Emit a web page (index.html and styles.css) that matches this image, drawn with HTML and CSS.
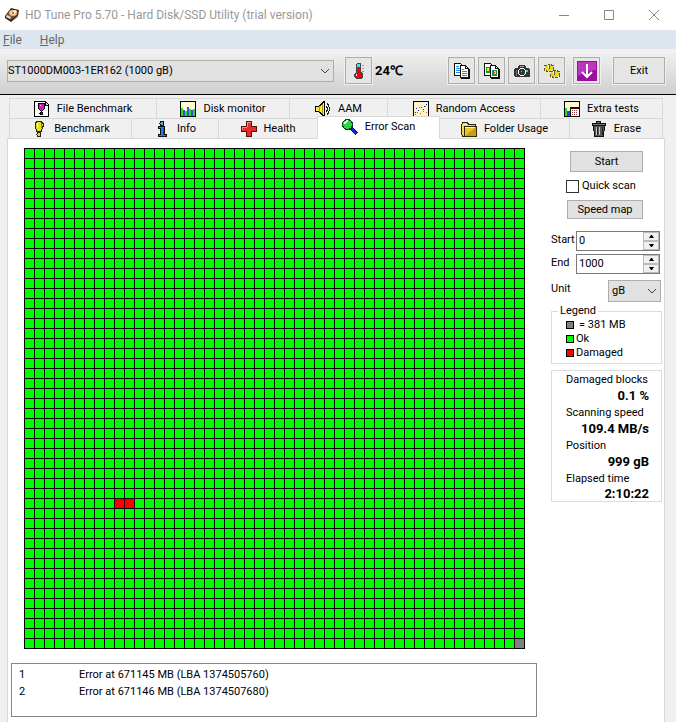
FILE: index.html
```html
<!DOCTYPE html>
<html lang="en">
<head>
<meta charset="utf-8">
<meta name="viewport" content="width=device-width, initial-scale=1">
<title>HD Tune Pro 5.70 - Hard Disk/SSD Utility (trial version)</title>
<link rel="stylesheet" href="styles.css">
</head>
<body>
<header class="titlebar">
  <svg class="app-icon" viewBox="0 0 16 16" aria-hidden="true"><path d="M1 9 7 1l8 2-1 6-7 6-6-4z" fill="#252020"/><path d="m2 8 5-6 7 2-1 4-6 5-5-3z" fill="#765037"/><ellipse cx="9" cy="6" rx="4" ry="3" fill="#f2b878"/><path d="m6 6 5-3 2 1-3 4z" fill="#fff0ce"/><circle cx="9" cy="6" r="1" fill="#765037"/><path d="m3 8 4 2-1 2-4-2z" fill="#ddd"/><path d="m12 10 2-2v2l-6 4z" fill="#c17438"/></svg>
  <h1 class="title">HD Tune Pro 5.70 - Hard Disk/SSD Utility (trial version)</h1>
  <div class="window-controls">
    <button class="window-button" aria-label="Minimize"><svg viewBox="0 0 12 12"><path d="M1 6.500h10"/></svg></button>
    <button class="window-button" aria-label="Maximize"><svg viewBox="0 0 12 12"><path d="M1.500 1.500h9v9h-9z"/></svg></button>
    <button class="window-button" aria-label="Close"><svg viewBox="0 0 12 12"><path d="m1 1 10 10M11 1 1 11"/></svg></button>
  </div>
</header>
<nav class="menu"><a href="#file"><u>F</u>ile</a><a href="#help"><u>H</u>elp</a></nav>
<div class="toolbar">
  <div class="select-box drive">
    <select aria-label="Drive"><option>ST1000DM003-1ER162 (1000 gB)</option></select>
    <svg class="chevron" viewBox="0 0 10 6"><path d="m1 1 4 4 4-4"/></svg>
  </div>
  <button class="tool" aria-label="Temperature"><svg class="icon" viewBox="0 0 16 16"><path d="M6 0h4v9l2 2v3l-2 2H5l-2-2v-3l2-2V1h1z" fill="#444"/><path d="M6 1h3v4H6z" fill="#4de0e8"/><path d="M6 4h3v6l2 2v2l-2 1H6l-2-1v-2l2-2z" fill="#f00"/><path d="M5.500 11v2" stroke="#fff"/><path d="M11 2.500h2M11 5.500h2M11 8.500h2" stroke="#999"/></svg></button>
  <span class="temperature">24℃</span>
  <div class="tool-group">
    <button class="tool" aria-label="Copy text"><svg class="icon" viewBox="0 0 16 16"><path d="M.5.500h6l3 3v9h-9z" fill="#fff" stroke="#111"/><path d="M2 3.500h3M2 5.500h4M2 7.500h4M2 9.500h4" stroke="#258be8"/><path d="M6.500 2.500h5l3 3v9h-8z" fill="#fff" stroke="#111"/><path d="M11.500 2.500v3h3M7 15.500h8.500V6" fill="none" stroke="#111"/><path d="M8 6.500h2M8 8.500h5M8 10.500h5M8 12.500h5" stroke="#258be8"/></svg></button>
    <button class="tool" aria-label="Copy image"><svg class="icon" viewBox="0 0 16 16"><path d="M.5.500h6l3 3v9h-9z" fill="#fff" stroke="#111"/><path d="M2 4h4v6H2z" fill="#149832"/><path d="M3 5h2v3H3z" fill="#ffe03b"/><path d="M6.500 2.500h5l3 3v9h-8z" fill="#fff" stroke="#111"/><path d="M11.500 2.500v3h3M7 15.500h8.500V6" fill="none" stroke="#111"/><path d="M8 7h5v6H8z" fill="#149832"/><path d="M8 7h2v2H8z" fill="#2766dc"/><path d="M10 8h2v3h-2z" fill="#ffe03b"/><path d="M10 9h1v1h-1z" fill="#f33"/></svg></button>
    <button class="tool" aria-label="Save screenshot"><svg class="icon" viewBox="0 0 16 16"><path d="M1 5h3V3h1V2h6v1h1v2h3v1h1v7l-1 1H1l-1-1V6h1z" fill="#303535"/><path d="M6 3h4v1H6z" fill="#aaa"/><path d="M6 5h4v1h1v1h1v4h-1v1h-1v1H6v-1H5v-1H4V7h1V6h1z" fill="#fff"/><path d="M6 6h4v1h1v4h-1v1H6v-1H5V7h1z" fill="#303535"/><path d="M7 8h1v1H7z" fill="#bbb"/><path d="M12 7h2v2h-2z" fill="#38e658"/><path d="M2 7h1v6H2z" fill="#777"/></svg></button>
    <button class="tool" aria-label="Options"><svg class="icon gears" viewBox="0 0 16 16"><ellipse cx="5" cy="5" rx="4" ry="3" fill="#d8cc17" stroke="#625c12" stroke-width="3" stroke-dasharray="2 1"/><ellipse cx="5" cy="5" rx="4" ry="3" fill="#e5d91d"/><ellipse cx="11" cy="11" rx="4" ry="3" fill="#d8cc17" stroke="#625c12" stroke-width="3" stroke-dasharray="2 1"/><ellipse cx="11" cy="11" rx="4" ry="3" fill="#e5d91d"/><path d="M5.500 1v5M10.500 7v5" stroke="#555"/><path d="M4.500 2v3M9.500 8v3" stroke="#fff"/></svg></button>
    <button class="tool update" aria-label="Update"><svg viewBox="0 0 20 20"><path d="M0 0h20v20H0z" fill="#9b0c9f"/><path d="M1 1h18v8Q9 10 1 15z" fill="#b936bd"/><path d="M10 3v13M5 11l5 5 5-5" fill="none" stroke="#fff" stroke-width="2"/></svg></button>
    <button class="tool exit">Exit</button>
  </div>
</div>
<main class="workspace">
  <nav class="tabs tabs-back">
    <button class="tab"><svg class="icon" viewBox="0 0 16 16"><path d="M.5.500h11l3 3v12H.5z" fill="#fff" stroke="#000"/><path d="M11.500 1v3h3" fill="#ddd" stroke="#000"/><path d="M5 2h5l1 2-1 4-2 2H7L5 8 4 4z" fill="#d018cc" stroke="#000"/><path d="M6 4.500h1" stroke="#fff"/><circle cx="7.500" cy="12.500" r="1.500" fill="#d018cc" stroke="#000"/></svg>File Benchmark</button>
    <button class="tab"><svg class="icon" viewBox="0 0 16 16"><path d="M0 0h16v16H0z" fill="#000"/><path d="M1 1h14v14H1z" fill="#fffbd1"/><path d="M1 7h2v8H1zm4 3h2v5H5zm4-2h2v7H9zm4 0h2v7h-2z" fill="#18e51e"/><path d="M3 9h2v6H3zm4-3h2v9H7zm4 3h2v6h-2z" fill="#4349e7"/></svg>Disk monitor</button>
    <button class="tab"><svg class="icon" viewBox="0 0 16 16"><path d="M.5 5.500H4l5-5v15l-5-5H.5z" fill="#ffe93b" stroke="#000"/><path d="M4.500 5v6M7.500 3v10" stroke="#a89500"/><path d="M11 5q3 3 0 6M12 2q5 6 0 12" fill="none" stroke="#222"/></svg>AAM</button>
    <button class="tab"><svg class="icon" viewBox="0 0 16 16"><path d="M0 0h16v16H0z" fill="#000"/><path d="M1 1h14v14H1z" fill="#fff5c4"/><path d="M2 11h1v1H2zm3-2h1v1H5zm3-3h1v1H8zm3-1h1v1h-1zm2-2h1v1h-1zM3 7h1v1H3zm7 1h1v1h-1z" fill="#2229b2"/><path d="M2 13h1v1H2zm2-2h1v1H4zm3 1h1v1H7zm3-2h1v1h-1zm3 1h1v1h-1zM6 6h1v1H6zm6-1h1v1h-1z" fill="#e44"/></svg>Random Access</button>
    <button class="tab"><svg class="icon" viewBox="0 0 16 16"><path d="M0 0h16v16H0z" fill="#000"/><path d="M1 1h14v14H1z" fill="#fff9cf"/><path d="M1 7h2v8H1z" fill="#22df33"/><path d="M3 10h3v5H3z" fill="#343ee0"/><path d="M6 6h10v10H6z" fill="#111"/><path d="M7 8h8v7H7z" fill="#fff"/><path d="M8 9h1v1H8zm2 0h1v1h-1zm2 0h1v1h-1zm-4 2h1v1H8zm2 0h1v1h-1zm2 0h1v1h-1zm-4 2h1v1H8zm2 0h1v1h-1zm2 0h1v1h-1z" fill="#933"/></svg>Extra tests</button>
  </nav>
  <nav class="tabs tabs-front">
    <button class="tab"><svg class="icon" viewBox="0 0 16 16"><path d="M6 .500h4l2 2v3l-2 5H6l-2-5v-3z" fill="#e4df16" stroke="#222"/><path d="M6.500 2v4" stroke="#fff"/><path d="M10.500 2v5" stroke="#8c8617"/><circle cx="8" cy="13.500" r="2" fill="#e4df16" stroke="#222"/></svg>Benchmark</button>
    <button class="tab"><svg class="icon" viewBox="0 0 16 16"><circle cx="8" cy="2.500" r="2" fill="#20bcec" stroke="#111"/><path d="M4.500 5.500h6v8h2v2h-8v-2h2v-6h-2z" fill="#1680ee" stroke="#111"/><path d="M9.500 7v7" stroke="#143cbc"/></svg>Info</button>
    <button class="tab"><svg class="icon" viewBox="0 0 16 16"><path d="M5.500.500h5v5h5v5h-5v5h-5v-5h-5v-5h5z" fill="#e42c2c" stroke="#5b1010"/><path d="M6.500 6V1.500h3M1.500 9V6.500h4" fill="none" stroke="#f88"/></svg>Health</button>
    <button class="tab active" aria-current="page"><svg class="icon" viewBox="0 0 16 16"><path d="m9 9 6 6" stroke="#111" stroke-width="4"/><path d="m10 10 5 5" stroke="#1b23e5" stroke-width="2"/><circle cx="5.500" cy="5.500" r="5" fill="#26d745" stroke="#173d1c"/><path d="M3 5q0-3 3-3" fill="none" stroke="#d4ffd8" stroke-width="2"/></svg>Error Scan</button>
    <button class="tab"><svg class="icon" viewBox="0 0 16 16"><path d="M.5 3.500 2 1.500h4l2 2h6v2h1v10H2l-1.500-2z" fill="#f0d850" stroke="#222"/><path d="M3.500 5.500h12v10h-12z" fill="#e9c52b" stroke="#332900"/><path d="M4 15 15 6v9z" fill="#c99d18"/><path d="M2 3.500h4M4 6.500h10" stroke="#fff4a3"/></svg>Folder Usage</button>
    <button class="tab"><svg class="icon" viewBox="0 0 16 16"><path d="M5.500 2V.500h4V2M1.500 2.500h13v2h-13z" fill="#777" stroke="#111"/><path d="M2.500 4.500h11l-1 11h-9z" fill="#555" stroke="#111"/><path d="M5.500 6v8M8.500 6v8" stroke="#c6c6c6"/><path d="M6.500 6v8M11.500 6v8" stroke="#222"/></svg>Erase</button>
  </nav>
  <section class="panel">
    <div class="scan">
      <svg class="map" viewBox="0 0 501 501" role="img" aria-label="Scanned blocks">
        <defs><pattern id="blocks" width="10" height="10" patternUnits="userSpaceOnUse"><rect width="10" height="10" fill="#000"/><rect x="1" y="1" width="9" height="9" fill="#0f0"/></pattern></defs>
        <rect width="501" height="501" fill="url(#blocks)"/>
        <path d="M91 351h9v9h-9zm10 0h9v9h-9z" fill="#f00"/>
        <path d="M491 491h9v9h-9z" fill="#808080"/>
      </svg>
      <aside class="side">
        <button class="action start">Start</button>
        <label class="check"><input type="checkbox">Quick scan</label>
        <button class="action speed">Speed map</button>
        <div class="field"><label for="start">Start</label><div class="number"><input id="start" type="text" value="0"><div class="spin"><button aria-label="Increase start"><svg viewBox="0 0 5 3"><path d="M0 3h5L3 0H2z"/></svg></button><button aria-label="Decrease start"><svg viewBox="0 0 5 3"><path d="M0 0h5L3 3H2z"/></svg></button></div></div></div>
        <div class="field"><label for="end">End</label><div class="number"><input id="end" type="text" value="1000"><div class="spin"><button aria-label="Increase end"><svg viewBox="0 0 5 3"><path d="M0 3h5L3 0H2z"/></svg></button><button aria-label="Decrease end"><svg viewBox="0 0 5 3"><path d="M0 0h5L3 3H2z"/></svg></button></div></div></div>
        <div class="field unit"><label for="unit">Unit</label><div class="select-box"><select id="unit"><option>gB</option></select><svg class="chevron" viewBox="0 0 10 6"><path d="m1 1 4 4 4-4"/></svg></div></div>
        <fieldset class="legend"><legend>Legend</legend>
          <ul><li class="size"><i></i>= 381 MB</li><li class="ok"><i></i>Ok</li><li class="damaged"><i></i>Damaged</li></ul>
        </fieldset>
        <dl class="stats">
          <dt>Damaged blocks</dt><dd>0.1 %</dd>
          <dt>Scanning speed</dt><dd>109.4 MB/s</dd>
          <dt>Position</dt><dd>999 gB</dd>
          <dt>Elapsed time</dt><dd>2:10:22</dd>
        </dl>
      </aside>
    </div>
    <div class="log">
      <table><tbody>
        <tr><td class="index">1</td><td>Error at 671145 MB (LBA 1374505760)</td></tr>
        <tr><td class="index">2</td><td>Error at 671146 MB (LBA 1374507680)</td></tr>
      </tbody></table>
    </div>
  </section>
</main>
</body>
</html>
```
FILE: styles.css
```css
* { box-sizing: border-box; }

body {
  margin: 0;
  min-height: 100vh;
  display: flex;
  flex-direction: column;
  background: #f0f0f0;
  color: #000;
  font: 11px/14px Roboto, "Liberation Sans", sans-serif;
}

button, input, select { font: inherit; color: inherit; border-radius: 0; }
button { padding: 0; }
svg { display: block; }
.icon { width: 16px; height: 16px; flex: none; shape-rendering: crispEdges; }

.titlebar {
  display: flex;
  align-items: center;
  height: 30px;
  padding-left: 4px;
  background: #fff;
}
.app-icon { width: 16px; height: 16px; }
.title {
  margin: 0 0 0 5px;
  color: #999;
  font: 12px/16px Roboto, sans-serif;
  white-space: nowrap;
}
.window-controls { display: flex; margin-left: auto; }
.window-button {
  display: grid;
  place-items: center;
  width: 45px;
  height: 30px;
  border: 0;
  background: none;
}
.window-button svg { width: 12px; height: 12px; fill: none; stroke: #888; }

.menu {
  display: flex;
  gap: 18px;
  height: 19px;
  padding-left: 3px;
  background: #dde5ee;
  font: 12px/20px Roboto, sans-serif;
}
.menu a { color: #666; text-decoration: none; }

.toolbar {
  display: flex;
  align-items: center;
  height: 46px;
  padding: 0 11px 2px 7px;
  border-bottom: 1px solid #000;
  background: linear-gradient(#f2f2f2, #cfcfcf);
}
.select-box { position: relative; height: 22px; }
.select-box select {
  appearance: none;
  width: 100%;
  height: 100%;
  padding: 0 20px 0 3px;
  border: 1px solid #adadad;
  background: #e1e1e1;
}
.select-box.drive select { padding-left: 0; }
.chevron {
  position: absolute;
  right: 4px;
  top: 8px;
  width: 10px;
  height: 6px;
  fill: none;
  stroke: #444;
  pointer-events: none;
}
.drive { flex: 1; max-width: 420px; }
.tool {
  display: grid;
  place-items: center;
  width: 27px;
  height: 27px;
  padding: 1px 0 0 1px;
  border: 1px solid #adadad;
  background: #e6e6e6;
  outline: 1px solid #efefef;
}
.drive + .tool { margin-left: 11px; }
.temperature { margin: 0 45px 0 3px; font-size: 13px; font-weight: bold; }
.tool-group { display: flex; gap: 3px; margin-left: auto; }
.update { margin-left: 5px; }
.update svg { width: 20px; height: 20px; }
.exit { width: 52px; margin-left: 10px; padding: 0; }

.workspace {
  flex: 1;
  display: flex;
  flex-direction: column;
  padding: 3px 11px 0 7px;
}
.tabs { display: grid; margin: 0 2px; height: 20px; border-left: 1px solid #d9d9d9; }
.tabs-back { grid-template-columns: 147fr 133fr 98fr 153fr 122fr; }
.tabs-front { grid-template-columns: 122fr 87fr 99fr 122fr 130fr 93fr; }
.tab {
  display: flex;
  align-items: center;
  justify-content: center;
  gap: 7px;
  border: solid #d9d9d9;
  border-width: 1px 1px 0 0;
  background: #f0f0f0;
  white-space: nowrap;
}
.active {
  position: relative;
  height: 23px;
  margin: -2px 0 0 -1px;
  padding-bottom: 2px;
  border-left-width: 1px;
  background: #fff;
}

.panel {
  flex: 1;
  padding: 9px 0 5px;
  border: solid #d9d9d9;
  border-width: 1px 1px 0;
  background: #fff;
}
.scan { display: flex; align-items: flex-start; gap: 26px; padding: 0 2px 0 16px; }
.map { flex: 1; min-width: 0; shape-rendering: crispEdges; }
.side { width: 111px; padding-top: 3px; }
.action { display: block; border: 1px solid #adadad; background: #e1e1e1; }
.start { width: 73px; height: 21px; margin-left: 19px; }
.speed { width: 76px; height: 19px; margin-left: 16px; }
.check { display: flex; align-items: center; gap: 3px; height: 28px; padding-left: 15px; }
.check input {
  appearance: none;
  width: 13px;
  height: 13px;
  margin: 0;
  border: 1px solid #333;
  background: #fff;
}
.check input:checked { background: #333; }
.field { display: flex; justify-content: space-between; margin: 3px 2px 0 0; }
.speed + .field { margin-top: 12px; }
.field label { padding-top: 2px; }
.number { display: flex; width: 84px; height: 20px; border: 1px solid #7a7a7a; }
.number input { flex: 1; min-width: 0; padding: 0 2px; border: 0; background: #fff; }
.spin { display: grid; grid-template-rows: 1fr 1fr; width: 16px; background: #f0f0f0; }
.spin button { display: grid; place-items: center; min-height: 0; border: 1px solid #bbb; background: #f0f0f0; }
.spin svg { width: 5px; height: 3px; }
.unit { margin: 6px 1px 0 0; }
.unit .select-box { width: 53px; }

.legend { margin: 2px 0 0; padding: 0 0 3px 14px; border: 1px solid #dcdcdc; min-width: 0; }
.legend legend { margin-left: -8px; padding: 0 2px; }
.legend ul { margin: 0; padding: 0; list-style: none; }
.legend li { display: flex; align-items: center; gap: 2px; }
.legend i { width: 8px; height: 8px; border: 1px solid #000; }
.legend .size { gap: 5px; }
.size i { background: #808080; }
.ok i { background: #0f0; }
.damaged i { background: #f00; }

.stats { margin: 6px 0 0; padding: 0 12px 0 14px; border: 1px solid #dcdcdc; }
.stats dt { line-height: 17px; }
.stats dd { margin: 0; text-align: right; font-size: 13px; font-weight: bold; line-height: 16px; white-space: nowrap; }
.stats dd:last-child { line-height: 14px; }

.log { margin: 14px 127px 0 3px; min-height: 54px; padding: 2px 7px; border: 1px solid #828790; }
.log table { border-collapse: collapse; }
.log td { height: 17px; padding: 0; }
.log .index { width: 60px; }
```
